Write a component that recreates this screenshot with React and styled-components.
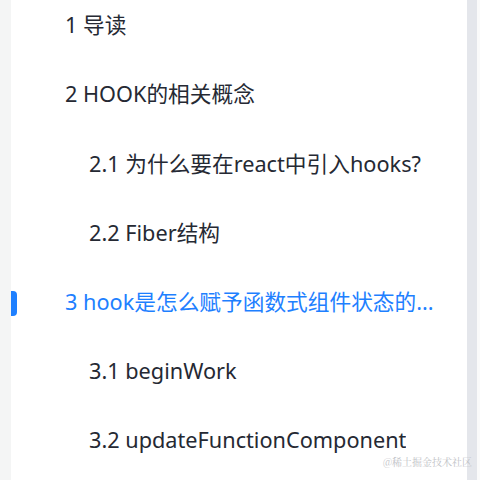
import React from "react";
import styled, { createGlobalStyle } from "styled-components";

const Global = createGlobalStyle`
  html, body { margin: 0; padding: 0; background: #ffffff; }
  body { font-family: "Noto Sans", "Noto Sans CJK SC", sans-serif; }
`;

const Page = styled.div`
  display: flex;
  width: 480px;
  height: 480px;
  overflow: hidden;
  position: relative;
  background: #ffffff;
`;

const Gutter = styled.div`
  width: 11px;
  flex: none;
  background: #f4f5f5;
`;

const Panel = styled.nav`
  flex: 1;
  background: #ffffff;
  overflow: hidden;
`;

const List = styled.ul`
  list-style: none;
  margin: -11px 0 0 0;
  padding: 0;
`;

const Item = styled.li`
  position: relative;
  height: 69.3px;
  display: flex;
  align-items: center;
  padding: 0 20px 0 ${(p) => (p.$level === 2 ? 78 : 54)}px;
  font-size: 21.7px;
  color: ${(p) => (p.$active ? "#1e80ff" : "#252933")};
  &::before {
    content: "";
    display: ${(p) => (p.$active ? "block" : "none")};
    position: absolute;
    left: 0;
    top: 50%;
    width: 6px;
    height: 25px;
    margin-top: -10px;
    background: #1e80ff;
    border-radius: 0 4px 4px 0;
  }
`;

const Label = styled.span`
  white-space: nowrap;
  overflow: hidden;
  text-overflow: ellipsis;
  min-width: 0;
`;

const Scrollbar = styled.div`
  width: 10px;
  flex: none;
  background: #e4e6eb;
`;

const Edge = styled.div`
  width: 3px;
  flex: none;
  background: #fafafa;
`;

const Watermark = styled.div`
  position: absolute;
  right: 8px;
  bottom: 11px;
  font-family: "Noto Serif CJK SC", "Liberation Serif", "Noto Sans CJK SC", serif;
  font-size: 10px;
  color: #c0c2c6;
`;

const items = [
  { text: "1 导读", level: 1 },
  { text: "2 HOOK的相关概念", level: 1 },
  { text: "2.1 为什么要在react中引入hooks?", level: 2 },
  { text: "2.2 Fiber结构", level: 2 },
  { text: "3 hook是怎么赋予函数式组件状态的...", level: 1, active: true },
  { text: "3.1 beginWork", level: 2 },
  { text: "3.2 updateFunctionComponent", level: 2 },
];

export default function App() {
  return (
    <>
      <Global />
      <Page>
        <Gutter />
        <Panel>
          <List>
            {items.map((it) => (
              <Item key={it.text} $level={it.level} $active={it.active}>
                <Label>{it.text}</Label>
              </Item>
            ))}
          </List>
        </Panel>
        <Scrollbar />
        <Edge />
        <Watermark>@稀土掘金技术社区</Watermark>
      </Page>
    </>
  );
}
